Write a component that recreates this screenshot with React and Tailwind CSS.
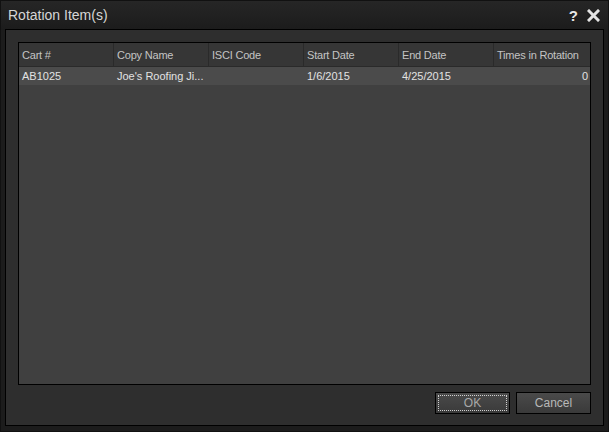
import React from "react";

const cols = [
  { label: "Cart #", w: "w-[95px]" },
  { label: "Copy Name", w: "w-[95px]" },
  { label: "ISCI Code", w: "w-[95px]" },
  { label: "Start Date", w: "w-[95px]" },
  { label: "End Date", w: "w-[95px]" },
  { label: "Times in Rotation", w: "flex-1" },
];

const row = ["AB1025", "Joe's Roofing Ji...", "", "1/6/2015", "4/25/2015", "0"];

export default function App() {
  return (
    <div
      className="w-[609px] h-[432px] bg-[#1c1c1c] flex flex-col border border-[#111] overflow-hidden"
      style={{ fontFamily: '"Liberation Sans", Arial, sans-serif' }}
    >
      <div className="h-[28px] flex items-center pl-[7px] pr-[8px] bg-gradient-to-b from-[#262626] to-[#1c1c1c]">
        <div className="text-[14px] text-[#d6d6d6] flex-1">Rotation Item(s)</div>
        <div className="text-[15px] font-bold text-[#e8e8e8] mr-[9px] leading-none">?</div>
        <svg width="13" height="13" viewBox="0 0 13 13">
          <path d="M2 2 L11 11 M11 2 L2 11" stroke="#e4e4e4" strokeWidth="3" strokeLinecap="square" />
        </svg>
      </div>
      <div className="flex-1 mx-[4px] mb-[5px] border border-black bg-[#2e2e2e] flex flex-col px-[12px] pt-[12px] pb-[11px]">
        <div className="flex-1 border border-black bg-[#404040] flex flex-col text-[11px]">
          <div className="h-[24px] flex bg-[#363636] border-b border-[#2a2a2a]">
            {cols.map((c, i) => (
              <div
                key={i}
                className={`${c.w} flex items-center pl-[3px] pt-[2px] text-[#c4c4c4] tracking-[-0.2px] ${i < cols.length - 1 ? "border-r border-[#2a2a2a]" : ""}`}
              >
                {c.label}
              </div>
            ))}
          </div>
          <div className="h-[18px] flex bg-[#4b4b4b] text-[#e2e2e2]">
            {cols.map((c, i) => (
              <div
                key={i}
                className={`${c.w} flex items-center pl-[3px] pt-[1px] ${i === cols.length - 1 ? "justify-end pr-[2px]" : ""}`}
              >
                {row[i]}
              </div>
            ))}
          </div>
        </div>
        <div className="flex justify-end gap-[6px] mt-[7px]">
          <button className="w-[75px] h-[22px] border border-black bg-gradient-to-b from-[#4a4a4a] to-[#3a3a3a] p-[2px] text-[12px] text-[#a8a8a8]">
            <div className="w-full h-full border border-dotted border-[#d0d0d0] flex items-center justify-center">OK</div>
          </button>
          <button className="w-[75px] h-[22px] border border-black bg-gradient-to-b from-[#4a4a4a] to-[#3a3a3a] text-[12px] text-[#b8b8b8] flex items-center justify-center">
            Cancel
          </button>
        </div>
      </div>
    </div>
  );
}
